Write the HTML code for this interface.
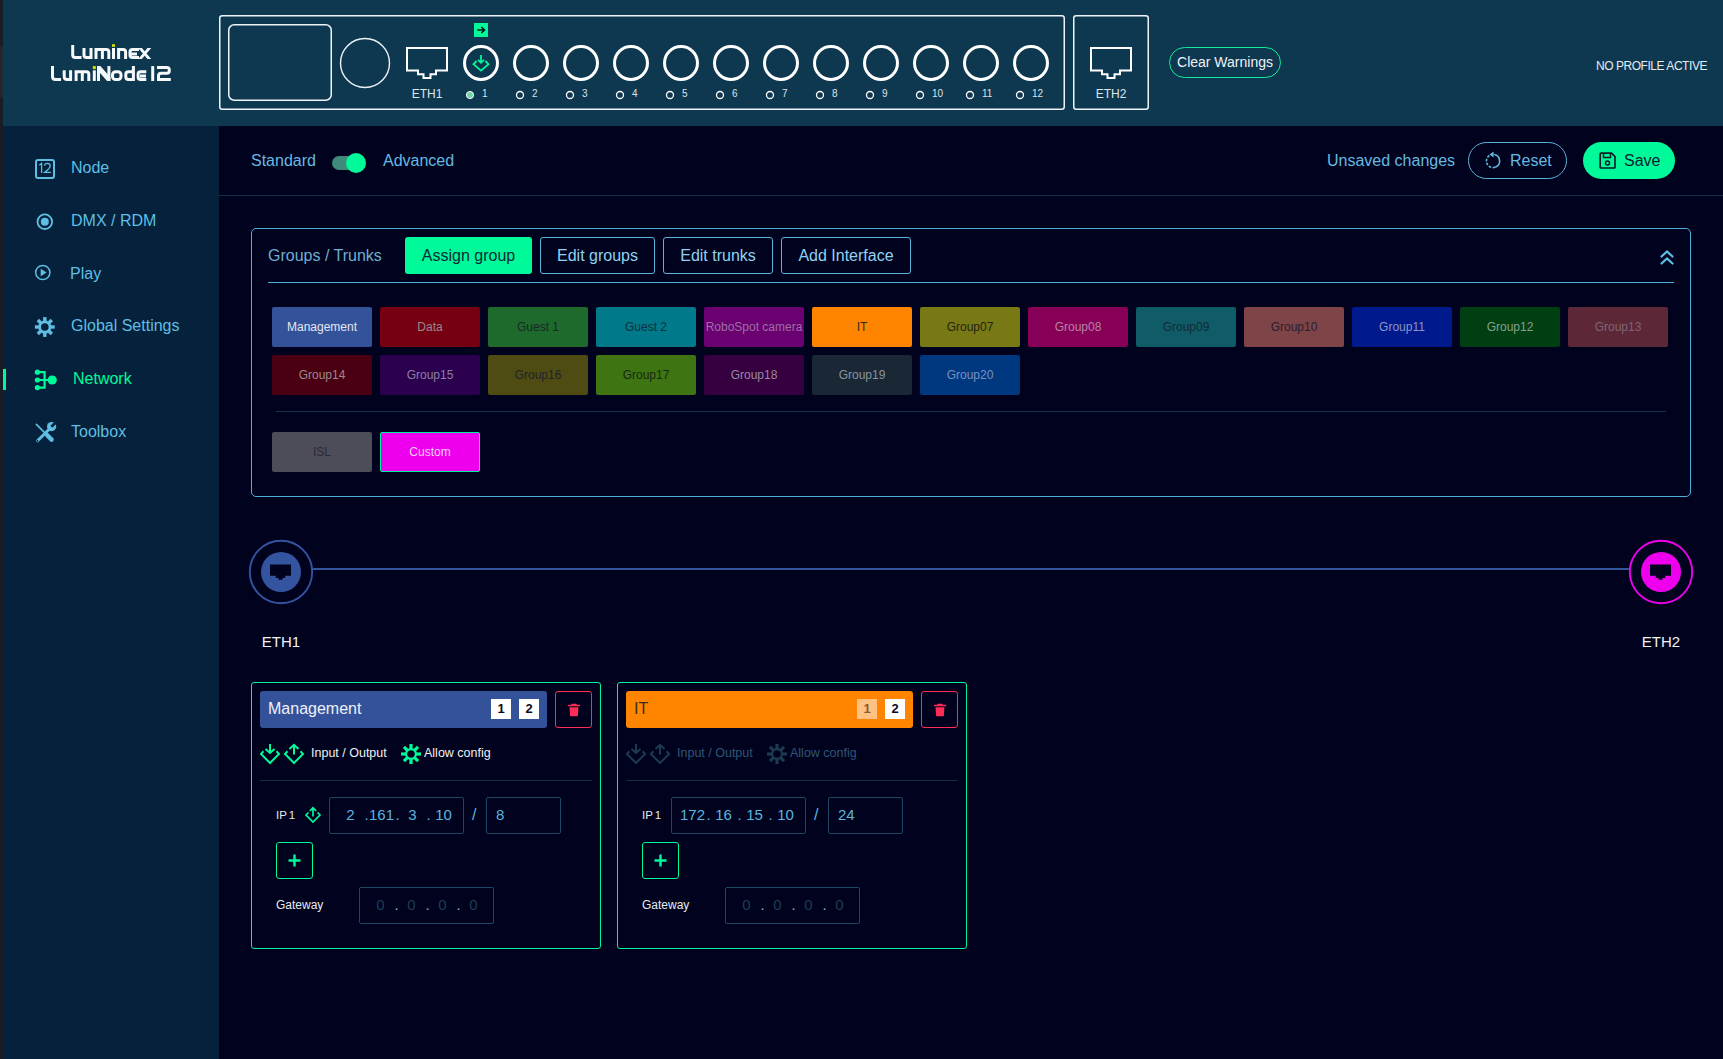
<!DOCTYPE html>
<html><head><meta charset="utf-8">
<style>
*{margin:0;padding:0;box-sizing:border-box;}
html,body{width:1723px;height:1059px;overflow:hidden;background:#01021e;font-family:"Liberation Sans",sans-serif;}
.a{position:absolute;}
#strip{left:0;top:0;width:3px;height:1059px;background:#1b1d26;}
#hdr{left:3px;top:0;width:1720px;height:126px;background:#0e3750;}
#side{left:3px;top:126px;width:216px;height:933px;background:#06213b;}
.nav{left:71px;font-size:16px;color:#5fbfe3;line-height:20px;white-space:nowrap;}
.dev{border:1.5px solid #e6eef2;border-radius:3px;}
.port{width:36px;height:36px;border:3px solid #fff;border-radius:50%;top:45px;}
.plab{top:88px;font-size:10px;color:#dce4ea;line-height:12px;}
.pdot{top:91px;width:8px;height:8px;border:1.3px solid #fff;border-radius:50%;}
.txt{color:#6cc3e8;font-size:16px;white-space:nowrap;line-height:20px;}
.chip{width:100px;height:40px;border-radius:2px;font-size:12px;line-height:40px;text-align:center;white-space:nowrap;overflow:hidden;}
.obtn{border:1px solid #5ab4da;border-radius:3px;color:#8fd3f0;font-size:16px;text-align:center;line-height:34px;height:36px;}
.card{border:1.5px solid #00f5a0;border-radius:3px;}
.inp{border:1px solid #1a4863;border-radius:2px;height:36px;}
.lbl{color:#e6ecf0;font-size:12px;white-space:nowrap;}

</style></head><body>
<div class="a" id="strip"></div>
<div class="a" id="hdr"></div>
<div class="a" id="side"></div>
<div class="a" style="left:0;top:46px;width:3px;height:51px;background:#242730;"></div>
<svg class="a" style="left:40px;top:38px" width="140" height="50" viewBox="40 38 140 50">
<g fill="none" stroke="#f6f8fa" stroke-width="3" stroke-linejoin="miter">
<path d="M72.7,45 V55 Q72.7,57.5 75.2,57.5 H81.5"/>
<path d="M84,48 V55 Q84,57.5 86.5,57.5 H91 M91,48 V59"/>
<path d="M96,59 V49.5 H106.3 Q108.8,49.5 108.8,52 V59 M102.4,49.5 V59"/>
<path d="M113.5,48 V59"/>
<path d="M118.6,59 V49.5 H123.1 Q125.6,49.5 125.6,52 V59"/>
<path d="M139,49.5 H132.5 Q130,49.5 130,52 V55 Q130,57.5 132.5,57.5 H139 M130,53.9 H137"/>

<path d="M52.5,66.1 V76.5 Q52.5,79.5 55.5,79.5 H61"/>
<path d="M64.2,70.3 V76.5 Q64.2,79.5 67.2,79.5 H70.6 M70.6,70.3 V81"/>
<path d="M76.1,81 V71.8 H86.4 Q88.8,71.8 88.8,74.2 V81 M82.3,71.8 V81"/>
<path d="M94.3,70.3 V81"/>

<rect x="112.5" y="71.8" width="8.5" height="7.7" rx="3"/>
<path d="M133.4,66.1 V81 M133.4,71.8 H128.5 Q125.8,71.8 125.8,74.5 V76.8 Q125.8,79.5 128.5,79.5 H133.4"/>
<path d="M146.3,71.8 H140.6 Q138.1,71.8 138.1,74.3 V77 Q138.1,79.5 140.6,79.5 H146.3 M140,75.9 H146"/>
<path d="M152.7,66.1 V81"/>
<path d="M157,67.6 H166.8 Q169.3,67.6 169.3,70.1 V70.8 Q169.3,73.2 166.9,73.2 H161.4 Q158.5,73.2 158.5,76.1 V79.5 H170.8"/>
</g>
<rect x="112" y="44.2" width="3" height="2.6" fill="#d6e400"/><g fill="#f6f8fa"><polygon points="138.2,48 141.9,48 151.2,59 147.5,59"/><polygon points="147.5,48 151.2,48 141.9,59 138.2,59"/><rect x="97" y="66.1" width="3" height="14.9"/><rect x="107.4" y="66.1" width="3" height="14.9"/><polygon points="97,66.1 100.4,66.1 110.4,77.6 110.4,81 107.1,81 97,69.5"/></g>
<rect x="92.8" y="66.1" width="3" height="3" fill="#d6e400"/>
</svg>
<svg class="a" style="left:0;top:0" width="1723" height="125" viewBox="0 0 1723 125"><rect x="219.75" y="15.75" width="844.5" height="93.5" rx="2.5" fill="none" stroke="#eef3f6" stroke-width="1.5"/><rect x="228.75" y="24.75" width="102.5" height="75.5" rx="5.5" fill="none" stroke="#eef3f6" stroke-width="1.5"/><circle cx="365" cy="63" r="24.5" fill="none" stroke="#eef3f6" stroke-width="1.4"/><rect x="1073.75" y="15.75" width="74.5" height="93.5" rx="2.5" fill="none" stroke="#eef3f6" stroke-width="1.5"/><path d="M407,48 H447 V70.5 H436 V74.2 H430.5 V78 H423.5 V74.2 H418 V70.5 H407 Z" fill="none" stroke="#fff" stroke-width="2"/><path d="M1091,48 H1131 V70.5 H1120 V74.2 H1114.5 V78 H1107.5 V74.2 H1102 V70.5 H1091 Z" fill="none" stroke="#fff" stroke-width="2"/><circle cx="481" cy="63" r="16.5" fill="none" stroke="#fff" stroke-width="3"/><circle cx="470" cy="95" r="3.6" fill="#6fd6a6" stroke="#fff" stroke-width="1"/><circle cx="531" cy="63" r="16.5" fill="none" stroke="#fff" stroke-width="3"/><circle cx="520" cy="95" r="3.5" fill="none" stroke="#fff" stroke-width="1.3"/><circle cx="581" cy="63" r="16.5" fill="none" stroke="#fff" stroke-width="3"/><circle cx="570" cy="95" r="3.5" fill="none" stroke="#fff" stroke-width="1.3"/><circle cx="631" cy="63" r="16.5" fill="none" stroke="#fff" stroke-width="3"/><circle cx="620" cy="95" r="3.5" fill="none" stroke="#fff" stroke-width="1.3"/><circle cx="681" cy="63" r="16.5" fill="none" stroke="#fff" stroke-width="3"/><circle cx="670" cy="95" r="3.5" fill="none" stroke="#fff" stroke-width="1.3"/><circle cx="731" cy="63" r="16.5" fill="none" stroke="#fff" stroke-width="3"/><circle cx="720" cy="95" r="3.5" fill="none" stroke="#fff" stroke-width="1.3"/><circle cx="781" cy="63" r="16.5" fill="none" stroke="#fff" stroke-width="3"/><circle cx="770" cy="95" r="3.5" fill="none" stroke="#fff" stroke-width="1.3"/><circle cx="831" cy="63" r="16.5" fill="none" stroke="#fff" stroke-width="3"/><circle cx="820" cy="95" r="3.5" fill="none" stroke="#fff" stroke-width="1.3"/><circle cx="881" cy="63" r="16.5" fill="none" stroke="#fff" stroke-width="3"/><circle cx="870" cy="95" r="3.5" fill="none" stroke="#fff" stroke-width="1.3"/><circle cx="931" cy="63" r="16.5" fill="none" stroke="#fff" stroke-width="3"/><circle cx="920" cy="95" r="3.5" fill="none" stroke="#fff" stroke-width="1.3"/><circle cx="981" cy="63" r="16.5" fill="none" stroke="#fff" stroke-width="3"/><circle cx="970" cy="95" r="3.5" fill="none" stroke="#fff" stroke-width="1.3"/><circle cx="1031" cy="63" r="16.5" fill="none" stroke="#fff" stroke-width="3"/><circle cx="1020" cy="95" r="3.5" fill="none" stroke="#fff" stroke-width="1.3"/></svg>
<div class="a" style="left:406px;top:87px;width:42px;text-align:center;font-size:12px;color:#dfe6eb;line-height:14px;">ETH1</div>
<div class="a" style="left:1090px;top:87px;width:42px;text-align:center;font-size:12px;color:#dfe6eb;line-height:14px;">ETH2</div>
<div class="a plab" style="left:482px;">1</div>
<div class="a plab" style="left:532px;">2</div>
<div class="a plab" style="left:582px;">3</div>
<div class="a plab" style="left:632px;">4</div>
<div class="a plab" style="left:682px;">5</div>
<div class="a plab" style="left:732px;">6</div>
<div class="a plab" style="left:782px;">7</div>
<div class="a plab" style="left:832px;">8</div>
<div class="a plab" style="left:882px;">9</div>
<div class="a plab" style="left:932px;">10</div>
<div class="a plab" style="left:982px;">11</div>
<div class="a plab" style="left:1032px;">12</div>
<svg class="a" style="left:474px;top:23px" width="14" height="14" viewBox="0 0 14 14"><rect width="14" height="14" fill="#00fa9a"/>
<path d="M3.3,7 H10.3 M7.4,4 L10.5,7 L7.4,10" fill="none" stroke="#021018" stroke-width="1.5"/></svg>
<svg class="a" style="left:472px;top:54px" width="18" height="18" viewBox="0 0 18 18">
<path d="M9,1 V8.5 M6,5.8 L9,8.8 L12,5.8" fill="none" stroke="#00fa9a" stroke-width="1.8"/>
<path d="M4.6,7 L1.5,10.2 L9,16.6 L16.5,10.2 L13.4,7" fill="none" stroke="#00fa9a" stroke-width="1.8"/></svg>
<div class="a" style="left:1169px;top:47px;width:112px;height:31px;border:1.5px solid #14e89a;border-radius:16px;color:#eef2f5;font-size:14px;line-height:28px;text-align:center;white-space:nowrap;">Clear Warnings</div>
<div class="a" style="left:1560px;top:59px;width:147px;text-align:right;color:#e6ecf0;font-size:12px;letter-spacing:-0.45px;line-height:14px;white-space:nowrap;">NO PROFILE ACTIVE</div><div class="a nav" style="left:71px;top:158px;color:#5fbfe3;">Node</div>
<div class="a nav" style="left:71px;top:211px;color:#5fbfe3;">DMX / RDM</div>
<div class="a nav" style="left:70px;top:264px;color:#5fbfe3;">Play</div>
<div class="a nav" style="left:71px;top:316px;color:#5fbfe3;">Global Settings</div>
<div class="a nav" style="left:73px;top:369px;color:#00fa9a;">Network</div>
<div class="a nav" style="left:71px;top:422px;color:#5fbfe3;">Toolbox</div>
<div class="a" style="left:3px;top:369px;width:3px;height:21px;background:#00fa9a;"></div>
<svg class="a" style="left:0;top:125px" width="219" height="340" viewBox="0 125 219 340">
<rect x="36" y="160" width="18" height="18" rx="2" fill="none" stroke="#5fbfe3" stroke-width="2"/>
<path d="M39.3,165.2 L41.6,163.4 V173" fill="none" stroke="#5fbfe3" stroke-width="1.3"/>
<path d="M44.4,165.6 Q44.8,163.3 47.4,163.3 Q50.2,163.3 50.2,165.8 Q50.2,167.4 48.6,168.9 L44.6,172.4 H50.9" fill="none" stroke="#5fbfe3" stroke-width="1.3"/>
<circle cx="44.8" cy="221.7" r="7.3" fill="none" stroke="#5fbfe3" stroke-width="1.8"/>
<circle cx="44.8" cy="221.7" r="4" fill="#5fbfe3"/>
<circle cx="42.8" cy="272.5" r="7.1" fill="none" stroke="#5fbfe3" stroke-width="1.5"/>
<path d="M40.7,268.8 L46.6,272.5 L40.7,276.2 Z" fill="#5fbfe3"/>
<g transform="translate(44.8,327)"><circle r="5.2" fill="none" stroke="#5fbfe3" stroke-width="2.8"/><rect x="-1.7" y="-9.9" width="3.4" height="4.7" fill="#5fbfe3" transform="rotate(0.0)"/><rect x="-1.7" y="-9.9" width="3.4" height="4.7" fill="#5fbfe3" transform="rotate(45.0)"/><rect x="-1.7" y="-9.9" width="3.4" height="4.7" fill="#5fbfe3" transform="rotate(90.0)"/><rect x="-1.7" y="-9.9" width="3.4" height="4.7" fill="#5fbfe3" transform="rotate(135.0)"/><rect x="-1.7" y="-9.9" width="3.4" height="4.7" fill="#5fbfe3" transform="rotate(180.0)"/><rect x="-1.7" y="-9.9" width="3.4" height="4.7" fill="#5fbfe3" transform="rotate(225.0)"/><rect x="-1.7" y="-9.9" width="3.4" height="4.7" fill="#5fbfe3" transform="rotate(270.0)"/><rect x="-1.7" y="-9.9" width="3.4" height="4.7" fill="#5fbfe3" transform="rotate(315.0)"/></g>
<circle cx="37.4" cy="372.2" r="2.6" fill="#00fa9a"/>
<circle cx="37.4" cy="380" r="2.6" fill="#00fa9a"/>
<circle cx="37.4" cy="387.6" r="2.6" fill="#00fa9a"/>
<path d="M37.4,372.2 H44.6 V387.6 H37.4 M37.4,380 H52" fill="none" stroke="#00fa9a" stroke-width="2.2"/>
<circle cx="52.2" cy="380" r="4.6" fill="#00fa9a"/>
<path d="M36.4,424.3 L46,434" stroke="#5fbfe3" stroke-width="1.7" stroke-linecap="round"/>
<path d="M47.2,435.2 L51.6,439.6" stroke="#5fbfe3" stroke-width="4.4" stroke-linecap="round"/>
<path d="M37.6,440.8 L48.6,429.8" stroke="#5fbfe3" stroke-width="3" stroke-linecap="round"/>
<circle cx="51.6" cy="426.6" r="4.6" fill="#5fbfe3"/>
<path d="M51.4,426.8 L56.5,421.7" stroke="#06213b" stroke-width="2.8"/>
<circle cx="37.6" cy="440.8" r="0.9" fill="#06213b"/>
</svg><div class="a txt" style="left:251px;top:151px;color:#66bae0;">Standard</div>
<div class="a" style="left:332px;top:156px;width:28px;height:14px;border-radius:7px;background:#3f8a78;"></div>
<div class="a" style="left:346px;top:153px;width:20px;height:20px;border-radius:50%;background:#00fa9a;"></div>
<div class="a txt" style="left:383px;top:151px;color:#66bae0;">Advanced</div>
<div class="a" style="left:219px;top:195px;width:1504px;height:1px;background:#0c2e46;"></div>
<div class="a txt" style="left:1327px;top:151px;color:#66bae0;">Unsaved changes</div>
<div class="a" style="left:1468px;top:142px;width:99px;height:37px;border:1px solid #5ab4da;border-radius:19px;"></div>
<svg class="a" style="left:1480px;top:148px" width="26" height="26" viewBox="1480 148 26 26">
<path d="M1494.15,154.5 A6.6,6.6 0 0 1 1495.26,167.2" fill="none" stroke="#66bae0" stroke-width="1.6"/>
<path d="M1495.26,167.2 A6.6,6.6 0 1 1 1492.2,154.45" fill="none" stroke="#66bae0" stroke-width="1.6" stroke-dasharray="2.6 1.5"/>
<path d="M1489.6,154.6 L1493.6,151.6 L1493.6,157.4 Z" fill="#66bae0"/>
</svg>
<div class="a txt" style="left:1510px;top:151px;color:#66bae0;">Reset</div>
<div class="a" style="left:1583px;top:142px;width:92px;height:37px;border-radius:19px;background:#00fa9a;"></div>
<svg class="a" style="left:1598px;top:151px" width="19" height="19" viewBox="0 0 19 19">
<path d="M3,2.2 H13.6 L17,5.6 V16.2 Q17,17 16.2,17 H3 Q2.2,17 2.2,16.2 V3 Q2.2,2.2 3,2.2 Z" fill="none" stroke="#0a1e26" stroke-width="1.7" stroke-linejoin="round"/>
<path d="M5.5,2 V6.5 H12.5 V2" fill="none" stroke="#0a1e26" stroke-width="1.5"/>
<circle cx="9.5" cy="12" r="2" fill="none" stroke="#0a1e26" stroke-width="1.5"/>
</svg>
<div class="a txt" style="left:1624px;top:151px;color:#0a2230;">Save</div>
<div class="a" style="left:251px;top:228px;width:1440px;height:269px;border:1.5px solid #4fb1da;border-radius:5px;"></div>
<div class="a txt" style="left:268px;top:246px;color:#70aed0;">Groups / Trunks</div>
<div class="a" style="left:405px;top:237px;width:127px;height:37px;background:#00fa9a;border-radius:3px;color:#0a2a38;font-size:16px;line-height:37px;text-align:center;">Assign group</div>
<div class="a obtn" style="left:540px;top:237px;width:115px;height:37px;line-height:35px;">Edit groups</div>
<div class="a obtn" style="left:663px;top:237px;width:110px;height:37px;line-height:35px;">Edit trunks</div>
<div class="a obtn" style="left:781px;top:237px;width:130px;height:37px;line-height:35px;">Add Interface</div>
<div class="a" style="left:268px;top:281.8px;width:1406px;height:1.3px;background:#4fb1da;"></div>
<svg class="a" style="left:1656.5px;top:248.5px" width="20" height="20" viewBox="0 0 20 20">
<path d="M4.5,7.5 L10,2.5 L15.5,7.5 M4.5,14.5 L10,9.5 L15.5,14.5" fill="none" stroke="#5ec0e6" stroke-width="2.2" stroke-linecap="round"/>
</svg>
<div class="a chip" style="left:272px;top:307px;background:#34529a;color:#e2e6f0;">Management</div>
<div class="a chip" style="left:380px;top:307px;background:#760012;color:#9a8890;">Data</div>
<div class="a chip" style="left:488px;top:307px;background:#1d6a2c;color:#1a2826;">Guest 1</div>
<div class="a chip" style="left:596px;top:307px;background:#00798a;color:#10303c;">Guest 2</div>
<div class="a chip" style="left:704px;top:307px;background:#6b0071;color:#9a70a4;">RoboSpot camera</div>
<div class="a chip" style="left:812px;top:307px;background:#ff8500;color:#382a22;">IT</div>
<div class="a chip" style="left:920px;top:307px;background:#787814;color:#242414;">Group07</div>
<div class="a chip" style="left:1028px;top:307px;background:#860058;color:#b880a4;">Group08</div>
<div class="a chip" style="left:1136px;top:307px;background:#0f5c68;color:#162a34;">Group09</div>
<div class="a chip" style="left:1244px;top:307px;background:#7e4448;color:#282030;">Group10</div>
<div class="a chip" style="left:1352px;top:307px;background:#001a8e;color:#8a96c8;">Group11</div>
<div class="a chip" style="left:1460px;top:307px;background:#003f12;color:#88a08c;">Group12</div>
<div class="a chip" style="left:1568px;top:307px;background:#5c2838;color:#806474;">Group13</div>
<div class="a chip" style="left:272px;top:355px;background:#4a0012;color:#9a8890;">Group14</div>
<div class="a chip" style="left:380px;top:355px;background:#2a004f;color:#8e80a6;">Group15</div>
<div class="a chip" style="left:488px;top:355px;background:#4e4c12;color:#22222a;">Group16</div>
<div class="a chip" style="left:596px;top:355px;background:#3e7412;color:#182818;">Group17</div>
<div class="a chip" style="left:704px;top:355px;background:#360040;color:#9888a0;">Group18</div>
<div class="a chip" style="left:812px;top:355px;background:#1a2836;color:#88949e;">Group19</div>
<div class="a chip" style="left:920px;top:355px;background:#003880;color:#7890c0;">Group20</div>
<div class="a" style="left:276px;top:411px;width:1390px;height:1px;background:#11344c;"></div>
<div class="a chip" style="left:272px;top:432px;height:40px;background:#4d4c59;color:#2a2a38;">ISL</div>
<div class="a chip" style="left:380px;top:432px;height:40px;background:#ee00ee;color:#f4d0f4;border:1.5px solid #00f5a0;line-height:39px;">Custom</div>
<svg class="a" style="left:240px;top:530px" width="1483" height="90" viewBox="240 530 1483 90">
<line x1="312" y1="569" x2="1630" y2="569" stroke="#3454a0" stroke-width="2"/>
<circle cx="281" cy="572" r="31.2" fill="none" stroke="#3454a0" stroke-width="1.9"/>
<circle cx="281" cy="572" r="20" fill="#3454a0"/>
<path d="M270,564.5 H291 V575.8 H285.2 V578 H282.5 V579.8 H278.5 V578 H275.8 V575.8 H270 Z" fill="#01021e"/>
<circle cx="1661" cy="572" r="31.2" fill="none" stroke="#ee00ee" stroke-width="1.9"/>
<circle cx="1661" cy="572" r="20" fill="#ee00ee"/>
<path d="M1650,564.5 H1671 V575.8 H1665.2 V578 H1662.5 V579.8 H1658.5 V578 H1655.8 V575.8 H1650 Z" fill="#01021e"/>
</svg>
<div class="a" style="left:251px;top:633px;width:60px;text-align:center;color:#f0f2f5;font-size:15px;line-height:18px;">ETH1</div>
<div class="a" style="left:1631px;top:633px;width:60px;text-align:center;color:#f0f2f5;font-size:15px;line-height:18px;">ETH2</div><div class="a card" style="left:251px;top:682px;width:350px;height:267px;"></div>
<div class="a" style="left:260px;top:691px;width:287px;height:37px;background:#34529a;border-radius:3px;"></div>
<div class="a" style="left:268px;top:699px;color:#eef1f7;font-size:16px;line-height:20px;white-space:nowrap;">Management</div>
<div class="a" style="left:491px;top:699px;width:20px;height:20px;background:#fff;color:#0a0a1a;font-size:13px;font-weight:bold;text-align:center;line-height:20px;">1</div>
<div class="a" style="left:519px;top:699px;width:20px;height:20px;background:#fff;color:#0a0a1a;font-size:13px;font-weight:bold;text-align:center;line-height:20px;">2</div>
<div class="a" style="left:555px;top:691px;width:37px;height:37px;border:1.3px solid #ff2d55;border-radius:3px;"></div>
<svg class="a" style="left:251px;top:682px" width="350" height="267" viewBox="251 682 350 267"><path d="M568.8,705.5 H579.4 M572.2,704.6 H576" stroke="#ff2d55" stroke-width="1.7" stroke-linecap="round"/><path d="M569.5,707.2 H578.4 L577.9,715.4 Q577.8,716.2 577,716.2 H570.9 Q570.1,716.2 570,715.4 Z" fill="#ff2d55"/><path d="M263.5,751.3 L261,754 L270,763 L279,754 L276.5,751.3" fill="none" stroke="#00fa9a" stroke-width="2"/><path d="M270,744 V752.6 M265.5,749 L270,753 L274.5,749" fill="none" stroke="#00fa9a" stroke-width="2"/><path d="M287.5,751.3 L285,754 L294,763 L303,754 L300.5,751.3" fill="none" stroke="#00fa9a" stroke-width="2"/><path d="M294,754.5 V745 M289.5,749 L294,744.8 L298.5,749" fill="none" stroke="#00fa9a" stroke-width="2"/><g transform="translate(411,754)"><circle r="4.9" fill="none" stroke="#00fa9a" stroke-width="2.1"/><rect x="-1.6" y="-10" width="3.2" height="5" fill="#00fa9a" transform="rotate(0)"/><rect x="-1.6" y="-10" width="3.2" height="5" fill="#00fa9a" transform="rotate(45)"/><rect x="-1.6" y="-10" width="3.2" height="5" fill="#00fa9a" transform="rotate(90)"/><rect x="-1.6" y="-10" width="3.2" height="5" fill="#00fa9a" transform="rotate(135)"/><rect x="-1.6" y="-10" width="3.2" height="5" fill="#00fa9a" transform="rotate(180)"/><rect x="-1.6" y="-10" width="3.2" height="5" fill="#00fa9a" transform="rotate(225)"/><rect x="-1.6" y="-10" width="3.2" height="5" fill="#00fa9a" transform="rotate(270)"/><rect x="-1.6" y="-10" width="3.2" height="5" fill="#00fa9a" transform="rotate(315)"/></g><path d="M308.5,812.5 L306,815 L313,822 L320,815 L317.5,812.5" fill="none" stroke="#00fa9a" stroke-width="1.7"/><path d="M313,816.5 V808 M309.8,811 L313,807.8 L316.2,811" fill="none" stroke="#00fa9a" stroke-width="1.7"/><path d="M288.5,860.5 H300.5 M294.5,854.5 V866.5" stroke="#00fa9a" stroke-width="2.4"/></svg>
<div class="a" style="left:311px;top:745px;color:#eef1f4;font-size:12.5px;line-height:16px;white-space:nowrap;">Input / Output</div>
<div class="a" style="left:424px;top:745px;color:#eef1f4;font-size:12.5px;line-height:16px;white-space:nowrap;">Allow config</div>
<div class="a" style="left:260px;top:780px;width:332px;height:1px;background:#0f2f47;"></div>
<div class="a lbl" style="left:276px;top:808px;line-height:14px;font-size:11.5px;word-spacing:-1px;">IP 1</div>
<div class="a inp" style="left:329px;top:797px;width:135px;height:37px;"></div>
<div class="a" style="left:335.5px;top:805px;width:30px;text-align:center;color:#5ab6de;font-size:15px;line-height:20px;">2</div><div class="a" style="left:361.5px;top:805px;width:10px;text-align:center;color:#5ab6de;font-size:15px;line-height:20px;">.</div><div class="a" style="left:366.5px;top:805px;width:30px;text-align:center;color:#5ab6de;font-size:15px;line-height:20px;">161</div><div class="a" style="left:392.5px;top:805px;width:10px;text-align:center;color:#5ab6de;font-size:15px;line-height:20px;">.</div><div class="a" style="left:397.5px;top:805px;width:30px;text-align:center;color:#5ab6de;font-size:15px;line-height:20px;">3</div><div class="a" style="left:423.5px;top:805px;width:10px;text-align:center;color:#5ab6de;font-size:15px;line-height:20px;">.</div><div class="a" style="left:428.5px;top:805px;width:30px;text-align:center;color:#5ab6de;font-size:15px;line-height:20px;">10</div>
<div class="a" style="left:472px;top:805px;color:#5ab6de;font-size:16px;line-height:20px;">/</div>
<div class="a inp" style="left:486px;top:797px;width:75px;height:37px;"></div>
<div class="a" style="left:496px;top:805px;color:#5ab6de;font-size:15px;line-height:20px;">8</div>
<div class="a" style="left:276px;top:842px;width:37px;height:37px;border:1.5px solid #00fa9a;border-radius:3px;"></div>
<div class="a lbl" style="left:276px;top:898px;line-height:14px;">Gateway</div>
<div class="a inp" style="left:359px;top:887px;width:135px;height:37px;"></div>
<div class="a" style="left:365.5px;top:895px;width:30px;text-align:center;color:#1b3e55;font-size:15px;line-height:20px;">0</div><div class="a" style="left:391.5px;top:895px;width:10px;text-align:center;color:#7fb6d4;font-size:15px;line-height:20px;">.</div><div class="a" style="left:396.5px;top:895px;width:30px;text-align:center;color:#1b3e55;font-size:15px;line-height:20px;">0</div><div class="a" style="left:422.5px;top:895px;width:10px;text-align:center;color:#7fb6d4;font-size:15px;line-height:20px;">.</div><div class="a" style="left:427.5px;top:895px;width:30px;text-align:center;color:#1b3e55;font-size:15px;line-height:20px;">0</div><div class="a" style="left:453.5px;top:895px;width:10px;text-align:center;color:#7fb6d4;font-size:15px;line-height:20px;">.</div><div class="a" style="left:458.5px;top:895px;width:30px;text-align:center;color:#1b3e55;font-size:15px;line-height:20px;">0</div>
<div class="a card" style="left:617px;top:682px;width:350px;height:267px;"></div>
<div class="a" style="left:626px;top:691px;width:287px;height:37px;background:#ff8500;border-radius:3px;"></div>
<div class="a" style="left:634px;top:699px;color:#3a2c22;font-size:16px;line-height:20px;white-space:nowrap;">IT</div>
<div class="a" style="left:857px;top:699px;width:20px;height:20px;background:#ffc283;color:#8a5a2e;font-size:13px;font-weight:bold;text-align:center;line-height:20px;">1</div>
<div class="a" style="left:885px;top:699px;width:20px;height:20px;background:#fff;color:#0a0a1a;font-size:13px;font-weight:bold;text-align:center;line-height:20px;">2</div>
<div class="a" style="left:921px;top:691px;width:37px;height:37px;border:1.3px solid #ff2d55;border-radius:3px;"></div>
<svg class="a" style="left:617px;top:682px" width="350" height="267" viewBox="617 682 350 267"><path d="M934.8,705.5 H945.4 M938.2,704.6 H942" stroke="#ff2d55" stroke-width="1.7" stroke-linecap="round"/><path d="M935.5,707.2 H944.4 L943.9,715.4 Q943.8,716.2 943,716.2 H936.9 Q936.1,716.2 936,715.4 Z" fill="#ff2d55"/><path d="M629.5,751.3 L627,754 L636,763 L645,754 L642.5,751.3" fill="none" stroke="#1c3a52" stroke-width="2"/><path d="M636,744 V752.6 M631.5,749 L636,753 L640.5,749" fill="none" stroke="#1c3a52" stroke-width="2"/><path d="M653.5,751.3 L651,754 L660,763 L669,754 L666.5,751.3" fill="none" stroke="#1c3a52" stroke-width="2"/><path d="M660,754.5 V745 M655.5,749 L660,744.8 L664.5,749" fill="none" stroke="#1c3a52" stroke-width="2"/><g transform="translate(777,754)"><circle r="4.9" fill="none" stroke="#1c3a52" stroke-width="2.1"/><rect x="-1.6" y="-10" width="3.2" height="5" fill="#1c3a52" transform="rotate(0)"/><rect x="-1.6" y="-10" width="3.2" height="5" fill="#1c3a52" transform="rotate(45)"/><rect x="-1.6" y="-10" width="3.2" height="5" fill="#1c3a52" transform="rotate(90)"/><rect x="-1.6" y="-10" width="3.2" height="5" fill="#1c3a52" transform="rotate(135)"/><rect x="-1.6" y="-10" width="3.2" height="5" fill="#1c3a52" transform="rotate(180)"/><rect x="-1.6" y="-10" width="3.2" height="5" fill="#1c3a52" transform="rotate(225)"/><rect x="-1.6" y="-10" width="3.2" height="5" fill="#1c3a52" transform="rotate(270)"/><rect x="-1.6" y="-10" width="3.2" height="5" fill="#1c3a52" transform="rotate(315)"/></g><path d="M654.5,860.5 H666.5 M660.5,854.5 V866.5" stroke="#00fa9a" stroke-width="2.4"/></svg>
<div class="a" style="left:677px;top:745px;color:#2e5775;font-size:12.5px;line-height:16px;white-space:nowrap;">Input / Output</div>
<div class="a" style="left:790px;top:745px;color:#2e5775;font-size:12.5px;line-height:16px;white-space:nowrap;">Allow config</div>
<div class="a" style="left:626px;top:780px;width:332px;height:1px;background:#0f2f47;"></div>
<div class="a lbl" style="left:642px;top:808px;line-height:14px;font-size:11.5px;word-spacing:-1px;">IP 1</div>
<div class="a inp" style="left:671px;top:797px;width:135px;height:37px;"></div>
<div class="a" style="left:677.5px;top:805px;width:30px;text-align:center;color:#5ab6de;font-size:15px;line-height:20px;">172</div><div class="a" style="left:703.5px;top:805px;width:10px;text-align:center;color:#5ab6de;font-size:15px;line-height:20px;">.</div><div class="a" style="left:708.5px;top:805px;width:30px;text-align:center;color:#5ab6de;font-size:15px;line-height:20px;">16</div><div class="a" style="left:734.5px;top:805px;width:10px;text-align:center;color:#5ab6de;font-size:15px;line-height:20px;">.</div><div class="a" style="left:739.5px;top:805px;width:30px;text-align:center;color:#5ab6de;font-size:15px;line-height:20px;">15</div><div class="a" style="left:765.5px;top:805px;width:10px;text-align:center;color:#5ab6de;font-size:15px;line-height:20px;">.</div><div class="a" style="left:770.5px;top:805px;width:30px;text-align:center;color:#5ab6de;font-size:15px;line-height:20px;">10</div>
<div class="a" style="left:814px;top:805px;color:#5ab6de;font-size:16px;line-height:20px;">/</div>
<div class="a inp" style="left:828px;top:797px;width:75px;height:37px;"></div>
<div class="a" style="left:838px;top:805px;color:#5ab6de;font-size:15px;line-height:20px;">24</div>
<div class="a" style="left:642px;top:842px;width:37px;height:37px;border:1.5px solid #00fa9a;border-radius:3px;"></div>
<div class="a lbl" style="left:642px;top:898px;line-height:14px;">Gateway</div>
<div class="a inp" style="left:725px;top:887px;width:135px;height:37px;"></div>
<div class="a" style="left:731.5px;top:895px;width:30px;text-align:center;color:#1b3e55;font-size:15px;line-height:20px;">0</div><div class="a" style="left:757.5px;top:895px;width:10px;text-align:center;color:#7fb6d4;font-size:15px;line-height:20px;">.</div><div class="a" style="left:762.5px;top:895px;width:30px;text-align:center;color:#1b3e55;font-size:15px;line-height:20px;">0</div><div class="a" style="left:788.5px;top:895px;width:10px;text-align:center;color:#7fb6d4;font-size:15px;line-height:20px;">.</div><div class="a" style="left:793.5px;top:895px;width:30px;text-align:center;color:#1b3e55;font-size:15px;line-height:20px;">0</div><div class="a" style="left:819.5px;top:895px;width:10px;text-align:center;color:#7fb6d4;font-size:15px;line-height:20px;">.</div><div class="a" style="left:824.5px;top:895px;width:30px;text-align:center;color:#1b3e55;font-size:15px;line-height:20px;">0</div>
</body></html>
